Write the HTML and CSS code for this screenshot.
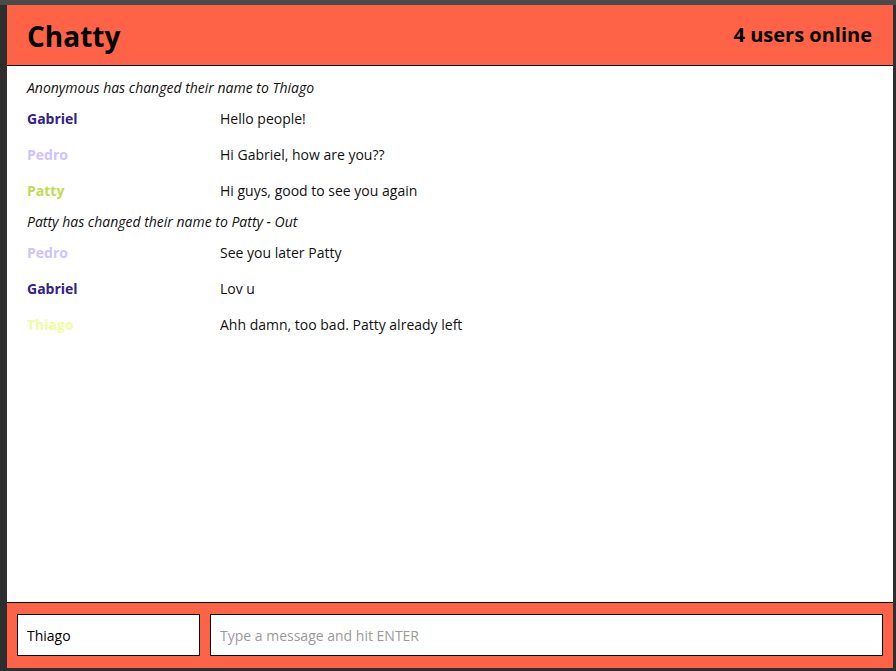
FILE: index.html
```html
<!DOCTYPE html>
<html lang="en">
<head>
<meta charset="utf-8">
<title>Chatty</title>
<link rel="stylesheet" href="styles.css">
</head>
<body>
<div class="frame">
  <div class="app">
    <header class="navbar">
      <span class="brand">Chatty</span>
      <span class="online">4 users online</span>
    </header>
    <main class="messages">
      <div class="system">Anonymous has changed their name to Thiago</div>
      <div class="message"><span class="user gabriel">Gabriel</span><span class="content">Hello people!</span></div>
      <div class="message"><span class="user pedro">Pedro</span><span class="content">Hi Gabriel, how are you??</span></div>
      <div class="message"><span class="user patty">Patty</span><span class="content">Hi guys, good to see you again</span></div>
      <div class="system">Patty has changed their name to Patty - Out</div>
      <div class="message"><span class="user pedro">Pedro</span><span class="content">See you later Patty</span></div>
      <div class="message"><span class="user gabriel">Gabriel</span><span class="content">Lov u</span></div>
      <div class="message"><span class="user thiago">Thiago</span><span class="content">Ahh damn, too bad. Patty already left</span></div>
    </main>
    <footer class="chatbar">
      <input class="username-input" type="text" value="Thiago">
      <input class="message-input" type="text" placeholder="Type a message and hit ENTER">
    </footer>
  </div>
</div>
</body>
</html>
```
FILE: styles.css
```css
html, body {
  margin: 0;
  padding: 0;
  height: 100%;
}
body {
  background: #2e2e2e;
  font-family: "Open Sans", "Noto Sans", sans-serif;
}
.frame {
  height: 100%;
  box-sizing: border-box;
  border-top: 5px solid #4b4b4b;
  padding: 0 3px 3px 7px;
  display: flex;
}
.app {
  flex: 1;
  display: flex;
  flex-direction: column;
  background: #fff;
}
.navbar {
  height: 61px;
  box-sizing: border-box;
  background: #ff6347;
  border-bottom: 1px solid #000;
  display: flex;
  align-items: center;
  justify-content: space-between;
  padding: 0 21px 0 20px;
  color: #000;
}
.brand {
  font-weight: 700;
  font-size: 28px;
  line-height: 1;
  margin-top: 1px;
}
.online {
  font-weight: 700;
  font-size: 20px;
  line-height: 1;
}
.messages {
  flex: 1;
  padding: 8px 20px 0 20px;
  font-size: 14px;
  color: #111;
}
.system {
  height: 26px;
  line-height: 28px;
  font-style: italic;
}
.message {
  height: 36px;
  display: flex;
  align-items: center;
}
.user {
  flex: 0 0 193px;
  font-weight: 700;
}
.gabriel { color: #33208c; }
.pedro { color: #cfc2ff; }
.patty { color: #bfdb4f; }
.thiago { color: #effea0; }
.chatbar {
  height: 66px;
  box-sizing: border-box;
  background: #ff6347;
  border-top: 1px solid #000;
  display: flex;
  gap: 10px;
  padding: 11px 10px;
}
.chatbar input {
  box-sizing: border-box;
  height: 42px;
  border: 1px solid #000;
  padding: 0 9px;
  font-family: "Open Sans", "Noto Sans", sans-serif;
  font-size: 14px;
  color: #000;
  background: #fff;
  outline: none;
  margin: 0;
}
.username-input {
  flex: 0 0 183px;
  width: 183px;
}
.message-input {
  flex: 1;
  min-width: 0;
}
.message-input::placeholder {
  color: #9a9a9a;
}
```
